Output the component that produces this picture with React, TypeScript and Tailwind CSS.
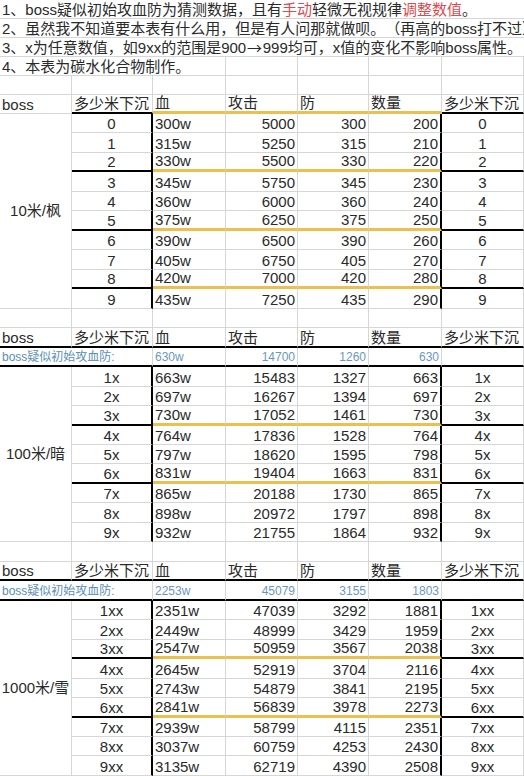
import type { ReactNode } from "react";
import clsx from "clsx";

// bottom border kinds: gray gridline, black thick, gold thick
type B = "g" | "k" | "y";
const bottoms: Record<B, string> = {
  g: "border-b border-b-[#d6d6d6]",
  k: "border-b-2 border-b-black",
  y: "border-b-[3px] border-b-[#ecc04f]",
};

function Cell({
  children,
  b = "g",
  r = "g",
  align = "left",
  className,
}: {
  children?: ReactNode;
  b?: B;
  r?: "g" | "k" | "none";
  align?: "left" | "center" | "right";
  className?: string;
}) {
  return (
    <div
      className={clsx(
        "flex items-end overflow-hidden whitespace-nowrap px-[2px] leading-[16px]",
        bottoms[b],
        r === "k" && "border-r-2 border-r-black",
        r === "g" && "border-r border-r-[#d6d6d6]",
        align === "right" && "justify-end",
        align === "center" && "justify-center",
        className
      )}
    >
      {children}
    </div>
  );
}

type Row = [string, string, string, string, string];

const sec1: Row[] = [
  ["0", "300w", "5000", "300", "200"],
  ["1", "315w", "5250", "315", "210"],
  ["2", "330w", "5500", "330", "220"],
  ["3", "345w", "5750", "345", "230"],
  ["4", "360w", "6000", "360", "240"],
  ["5", "375w", "6250", "375", "250"],
  ["6", "390w", "6500", "390", "260"],
  ["7", "405w", "6750", "405", "270"],
  ["8", "420w", "7000", "420", "280"],
  ["9", "435w", "7250", "435", "290"],
];

const sec2: Row[] = [
  ["1x", "663w", "15483", "1327", "663"],
  ["2x", "697w", "16267", "1394", "697"],
  ["3x", "730w", "17052", "1461", "730"],
  ["4x", "764w", "17836", "1528", "764"],
  ["5x", "797w", "18620", "1595", "798"],
  ["6x", "831w", "19404", "1663", "831"],
  ["7x", "865w", "20188", "1730", "865"],
  ["8x", "898w", "20972", "1797", "898"],
  ["9x", "932w", "21755", "1864", "932"],
];

const sec3: Row[] = [
  ["1xx", "2351w", "47039", "3292", "1881"],
  ["2xx", "2449w", "48999", "3429", "1959"],
  ["3xx", "2547w", "50959", "3567", "2038"],
  ["4xx", "2645w", "52919", "3704", "2116"],
  ["5xx", "2743w", "54879", "3841", "2195"],
  ["6xx", "2841w", "56839", "3978", "2273"],
  ["7xx", "2939w", "58799", "4115", "2351"],
  ["8xx", "3037w", "60759", "4253", "2430"],
  ["9xx", "3135w", "62719", "4390", "2508"],
];

function DataRows({ rows, breaks }: { rows: Row[]; breaks: number[] }) {
  return (
    <>
      {rows.map((row, i) => {
        const end = breaks.includes(i);
        return (
          <div key={i} className="contents">
            <Cell align="center" r="k" b={end ? "k" : "g"}>{row[0]}</Cell>
            <Cell b={end ? "y" : "g"}>{row[1]}</Cell>
            <Cell align="right" b={end ? "y" : "g"}>{row[2]}</Cell>
            <Cell align="right" b={end ? "y" : "g"}>{row[3]}</Cell>
            <Cell align="right" r="k" b={end ? "y" : "g"}>{row[4]}</Cell>
            <Cell align="center" b={end ? "k" : "g"}>{row[0]}</Cell>
          </div>
        );
      })}
    </>
  );
}

function Header({ b }: { b: "sec1" | "black" }) {
  const k: B = "k";
  const mid: B = b === "sec1" ? "y" : "k";
  return (
    <>
      <Cell b={b === "sec1" ? "g" : "k"}>boss</Cell>
      <Cell b={k}>多少米下沉</Cell>
      <Cell b={mid}>血</Cell>
      <Cell b={mid}>攻击</Cell>
      <Cell b={mid}>防</Cell>
      <Cell b={mid}>数量</Cell>
      <Cell b={k}>多少米下沉</Cell>
    </>
  );
}

function Suspect({ vals }: { vals: [string, string, string, string] }) {
  return (
    <>
      <Cell b="k" className="col-span-2 text-[12px] text-[#5a8eb5]">boss疑似初始攻血防:</Cell>
      <Cell b="k" className="text-[12px] text-[#6a98bb]">{vals[0]}</Cell>
      <Cell b="k" align="right" className="text-[12px] text-[#6a98bb]">{vals[1]}</Cell>
      <Cell b="k" align="right" className="text-[12px] text-[#6a98bb]">{vals[2]}</Cell>
      <Cell b="k" align="right" className="text-[12px] text-[#6a98bb]">{vals[3]}</Cell>
      <Cell b="k" />
    </>
  );
}

function Empty() {
  return (
    <>
      {[0, 1, 2, 3, 4, 5, 6].map((i) => (
        <Cell key={i} />
      ))}
    </>
  );
}

export default function App() {
  return (
    <div className="w-[524px] h-[776px] overflow-hidden bg-white">
      <div className="grid grid-cols-[72px_81px_73px_72px_71px_73px_82px] grid-rows-[repeat(6,19px)_repeat(34,19.47px)] text-[15px] text-[#2a2a2a] font-['Liberation_Sans','Noto_Sans_CJK_SC',sans-serif] [text-spacing-trim:space-all]">
        <Cell r="none" className="col-span-7">
          1、boss疑似初始攻血防为猜测数据，且有<span className="text-[#e04a4f]">手动</span>轻微无视规律
          <span className="text-[#e04a4f]">调整数值</span>。
        </Cell>
        <Cell r="none" className="col-span-7">
          2、虽然我不知道要本表有什么用，但是有人问那就做呗。（再高的boss打不过）
        </Cell>
        <Cell r="none" className="col-span-7">
          3、x为任意数值，如9xx的范围是900
          <span className="font-['Noto_Sans_CJK_SC',sans-serif] inline-block w-[22px] text-center">→</span>
          999均可，x值的变化不影响boss属性。
        </Cell>
        <Cell className="col-span-3">4、本表为碳水化合物制作。</Cell>
        <Cell />
        <Cell />
        <Cell />
        <Cell />
        <Empty />

        <Header b="sec1" />
        <Cell align="center" className="row-span-10 !items-center">10米/枫</Cell>
        <DataRows rows={sec1} breaks={[2, 5, 8]} />
        <Empty />

        <Header b="black" />
        <Suspect vals={["630w", "14700", "1260", "630"]} />
        <Cell align="center" className="row-span-9 !items-center">100米/暗</Cell>
        <DataRows rows={sec2} breaks={[2, 5]} />
        <Empty />

        <Header b="black" />
        <Suspect vals={["2253w", "45079", "3155", "1803"]} />
        <Cell align="center" className="row-span-9 !items-center">1000米/雪</Cell>
        <DataRows rows={sec3} breaks={[2, 5]} />
      </div>
    </div>
  );
}
